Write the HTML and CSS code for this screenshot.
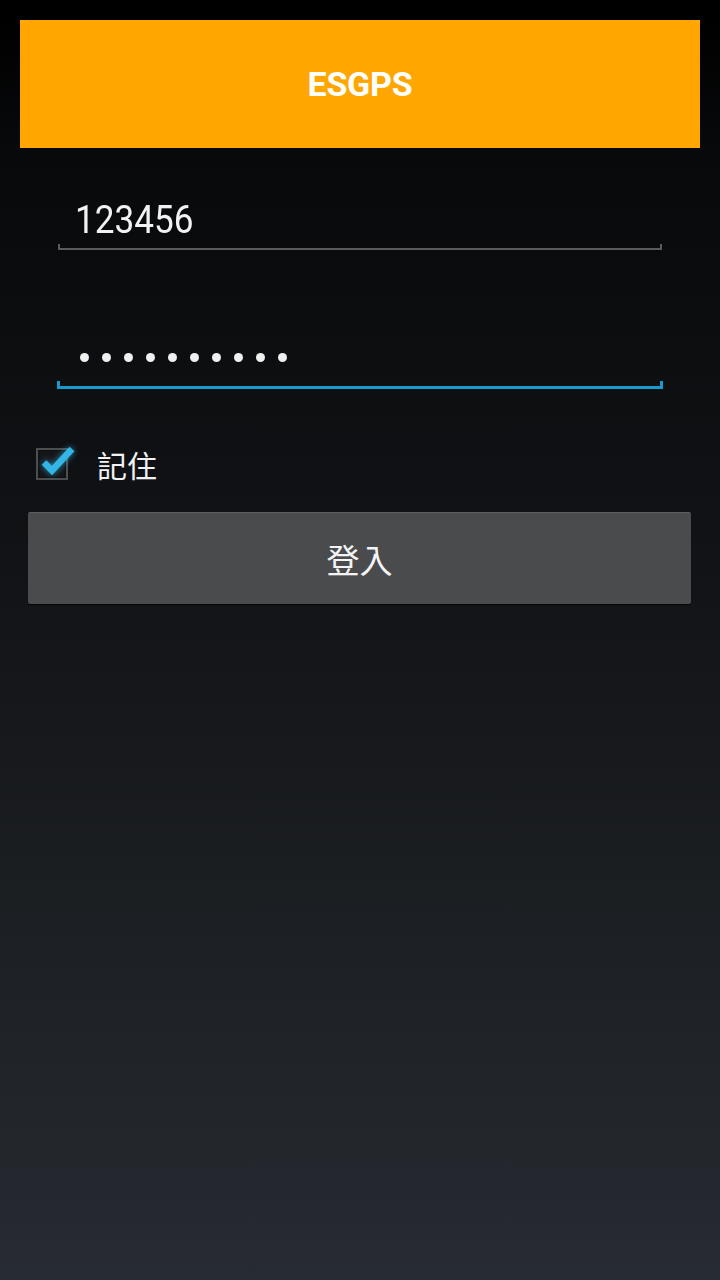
FILE: index.html
```html
<!DOCTYPE html>
<html lang="zh-Hant">
<head>
<meta charset="utf-8">
<title>ESGPS</title>
<link rel="stylesheet" href="styles.css">
</head>
<body>
<div class="page">
  <header class="appbar">ESGPS</header>
  <div class="field field-user">
    <div class="field-text"><span class="digits">123456</span></div>
    <div class="underline"></div>
  </div>
  <div class="field field-pass">
    <div class="dots">
      <span class="dot"></span><span class="dot"></span><span class="dot"></span><span class="dot"></span><span class="dot"></span>
      <span class="dot"></span><span class="dot"></span><span class="dot"></span><span class="dot"></span><span class="dot"></span>
    </div>
    <div class="underline underline-focus"></div>
  </div>
  <label class="remember">
    <span class="checkbox">
      <svg class="check" width="40" height="40" viewBox="0 0 40 40" aria-hidden="true">
        <path d="M9 19.5 L17 27.5 L37 6" fill="none" stroke="#33b5e5" stroke-width="6.5" stroke-linejoin="miter"/>
      </svg>
    </span>
    <span class="remember-text">記住</span>
  </label>
  <button class="login" type="button">登入</button>
</div>
</body>
</html>
```

FILE: styles.css
```css
html, body {
  margin: 0;
  padding: 0;
}

body {
  width: 720px;
  height: 1280px;
  background: linear-gradient(180deg, #000000 0px, #000000 20px, #08090b 150px, #111316 560px, #1d2024 950px, #272b32 1280px);
  font-family: Roboto, "Noto Sans CJK TC", sans-serif;
  color: #ffffff;
  overflow: hidden;
}

.page {
  display: flex;
  flex-direction: column;
  padding: 20px 20px 0;
}

.appbar {
  height: 128px;
  background: #ffa600;
  display: flex;
  align-items: center;
  justify-content: center;
  font-family: Roboto, sans-serif;
  font-weight: 700;
  font-size: 34px;
  letter-spacing: -0.2px;
  color: #ffffff;
}

.field {
  display: flex;
  flex-direction: column;
  margin: 0 38px;
}

.field-user {
  margin-top: 50px;
}

.field-text {
  font-family: Roboto, sans-serif;
  font-size: 39px;
  line-height: 44px;
  padding-left: 17px;
  color: #f2f2f2;
}

.digits {
  display: inline-block;
  transform: scaleX(0.9);
  transform-origin: left center;
}

.underline {
  margin-top: 2px;
  height: 4px;
  border: 2px solid #5a5b5d;
  border-top: none;
}

.field-pass {
  margin-top: 103px;
}

.dots {
  display: flex;
  gap: 13px;
  padding-left: 22px;
  height: 9px;
}

.dot {
  width: 9px;
  height: 9px;
  border-radius: 50%;
  background: #f0f0f0;
}

.underline-focus {
  margin: 19px -1px 0;
  height: 5px;
  border: 3px solid #159bd0;
  border-top: none;
}

.remember {
  display: flex;
  align-items: center;
  margin: 59px 0 0 16px;
  height: 32px;
}

.checkbox {
  position: relative;
  width: 28px;
  height: 28px;
  border: 2px solid #4d4e50;
  background: #151618;
  box-shadow: inset 0 0 2px #000;
}

.check {
  position: absolute;
  left: -3px;
  top: -7px;
  filter: drop-shadow(0 0 3px rgba(51, 181, 229, 0.75));
}

.remember-text {
  margin-left: 29px;
  font-family: "Noto Sans CJK TC", sans-serif;
  font-size: 30px;
  line-height: 32px;
  color: #f2f2f2;
}

.login {
  margin: 32px 0 0 8px;
  width: 663px;
  height: 92px;
  padding: 0;
  border: none;
  border-top: 1px solid #5e5f61;
  border-radius: 2px;
  background: #4a4b4d;
  box-shadow: 0 1px 1px rgba(0, 0, 0, 0.8);
  font-family: "Noto Sans CJK TC", sans-serif;
  font-size: 33px;
  color: #f4f4f4;
  display: flex;
  align-items: center;
  justify-content: center;
}
```
